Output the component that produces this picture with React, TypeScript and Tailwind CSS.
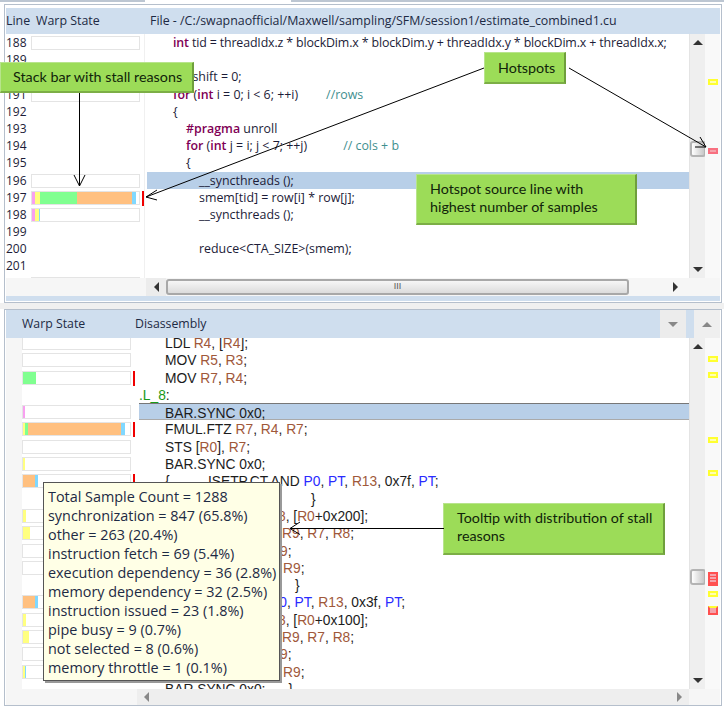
import React from "react";

type Seg = { w: number; c: string };

const PINK = "bg-[#f8a0f0]";
const YEL = "bg-[#ffff80]";
const GRN = "bg-[#80ff90]";
const ORG = "bg-[#ffc080]";
const CYN = "bg-[#80d8ff]";

function Bar({ segs = [], hot = false }: { segs?: Seg[]; hot?: boolean }) {
  return (
    <div className="flex items-start">
      <div className="flex w-[109px] h-[14px] border border-[#e4e4e4] bg-white overflow-hidden">
        {segs.map((s, i) => (
          <div key={i} className={s.c} style={{ width: s.w }} />
        ))}
      </div>
      {hot && <div className="w-[2px] h-[15px] ml-[2px] bg-[#f00000]" />}
    </div>
  );
}

function Tri({ dir, className = "" }: { dir: "up" | "down" | "left" | "right"; className?: string }) {
  const pts = {
    up: "0,6 5,1 10,6",
    down: "0,1 10,1 5,6",
    left: "6,0 6,10 1,5",
    right: "1,0 1,10 6,5",
  }[dir];
  const w = dir === "up" || dir === "down" ? 10 : 7;
  const h = dir === "up" || dir === "down" ? 7 : 10;
  return (
    <svg width={w} height={h} viewBox={`0 0 ${w} ${h}`} className={className}>
      <polygon points={pts} fill="currentColor" />
    </svg>
  );
}

const K = ({ children }: { children: React.ReactNode }) => (
  <span className="text-[#7f0055] font-semibold">{children}</span>
);
const C = ({ children, className = "" }: { children: React.ReactNode; className?: string }) => (
  <span className={`text-[#3f8f8f] ${className}`}>{children}</span>
);
const R = ({ children }: { children: React.ReactNode }) => <span className="text-[#a0583a]">{children}</span>;
const B = ({ children }: { children: React.ReactNode }) => <span className="text-[#2a2aff]">{children}</span>;

const srcRows: { n: number; segs?: Seg[]; bar?: boolean; hot?: boolean; sel?: boolean; pad: string; code?: React.ReactNode }[] = [
  { n: 188, bar: true, pad: "pl-[26px] tracking-[-0.14px]", code: <><K>int</K> tid = threadIdx.z * blockDim.x * blockDim.y + threadIdx.y * blockDim.x + threadIdx.x;</> },
  { n: 189, pad: "" },
  { n: 190, pad: "pl-[26px]", code: <><K>int</K> shift = 0;</> },
  { n: 191, bar: true, pad: "pl-[26px]", code: <><K>for</K> (<K>int</K> i = 0; i &lt; 6; ++i)<C className="ml-[28px]">//rows</C></> },
  { n: 192, pad: "pl-[26px]", code: "{" },
  { n: 193, pad: "pl-[39px]", code: <><K>#pragma</K> unroll</> },
  { n: 194, pad: "pl-[39px]", code: <><K>for</K> (<K>int</K> j = i; j &lt; 7; ++j)<C className="ml-[36px]">// cols + b</C></> },
  { n: 195, pad: "pl-[39px]", code: "{" },
  { n: 196, bar: true, sel: true, pad: "pl-[52px]", code: "__syncthreads ();" },
  { n: 197, bar: true, hot: true, segs: [{ w: 3, c: PINK }, { w: 5, c: YEL }, { w: 37, c: GRN }, { w: 55, c: ORG }, { w: 4, c: CYN }], pad: "pl-[52px]", code: "smem[tid] = row[i] * row[j];" },
  { n: 198, bar: true, segs: [{ w: 3, c: PINK }, { w: 4, c: YEL }, { w: 1, c: CYN }], pad: "pl-[52px]", code: "__syncthreads ();" },
  { n: 199, pad: "" },
  { n: 200, pad: "pl-[52px]", code: "reduce<CTA_SIZE>(smem);" },
  { n: 201, pad: "" },
  { n: 202, bar: true, segs: [{ w: 2, c: PINK }], pad: "pl-[52px]", code: "writemem = 0;" },
];

const asmRows: { segs?: Seg[]; bar?: boolean; hot?: boolean; sel?: boolean; pad: string; code?: React.ReactNode }[] = [
  { bar: true, pad: "pl-[26px]", code: <>LDL <R>R4</R>, [<R>R4</R>];</> },
  { bar: true, pad: "pl-[26px]", code: <>MOV <R>R5</R>, <R>R3</R>;</> },
  { bar: true, hot: true, segs: [{ w: 13, c: GRN }], pad: "pl-[26px]", code: <>MOV <R>R7</R>, <R>R4</R>;</> },
  { pad: "", code: <><span className="text-[#1a9a1a]">.L_8</span>:</> },
  { bar: true, sel: true, segs: [{ w: 2, c: PINK }], pad: "pl-[26px]", code: "BAR.SYNC 0x0;" },
  { bar: true, hot: true, segs: [{ w: 2, c: YEL }, { w: 3, c: GRN }, { w: 93, c: ORG }, { w: 4, c: CYN }], pad: "pl-[26px]", code: <>FMUL.FTZ <R>R7</R>, <R>R4</R>, <R>R7</R>;</> },
  { bar: true, pad: "pl-[26px]", code: <>STS [<R>R0</R>], <R>R7</R>;</> },
  { bar: true, segs: [{ w: 2, c: YEL }], pad: "pl-[26px]", code: "BAR.SYNC 0x0;" },
  { bar: true, hot: true, segs: [{ w: 12, c: ORG }, { w: 3, c: CYN }], pad: "pl-[26px]", code: <>{"{   .  .   ISETP.CT.AND "}<B>P0</B>, <B>PT</B>, <R>R13</R>, 0x7f, <B>PT</B>;</> },
  { pad: "pl-[172px]", code: "}" },
  { bar: true, segs: [{ w: 3, c: YEL }], pad: "pl-[129px]", code: <><R>R8</R>, [<R>R0</R>+0x200];</> },
  { bar: true, segs: [{ w: 7, c: YEL }], pad: "pl-[143px]", code: <><R>R9</R>, <R>R7</R>, <R>R8</R>;</> },
  { bar: true, pad: "pl-[131px]", code: <><R>R9</R>;</> },
  { bar: true, pad: "pl-[144px]", code: <><R>R9</R>;</> },
  { pad: "pl-[156px]", code: "}" },
  { bar: true, segs: [{ w: 12, c: ORG }, { w: 3, c: CYN }], pad: "pl-[131px]", code: <><B>P0</B>, <B>PT</B>, <R>R13</R>, 0x3f, <B>PT</B>;</> },
  { bar: true, segs: [{ w: 3, c: YEL }], pad: "pl-[129px]", code: <><R>R8</R>, [<R>R0</R>+0x100];</> },
  { bar: true, segs: [{ w: 6, c: YEL }], pad: "pl-[143px]", code: <><R>R9</R>, <R>R7</R>, <R>R8</R>;</> },
  { bar: true, pad: "pl-[131px]", code: <><R>R9</R>;</> },
  { bar: true, segs: [{ w: 2, c: YEL }, { w: 1, c: CYN }], pad: "pl-[144px]", code: <><R>R9</R>;</> },
  { pad: "pl-[26px]", code: "BAR.SYNC 0x0;      }" },
];

const stalls = [
  "Total Sample Count = 1288",
  "synchronization = 847 (65.8%)",
  "other = 263 (20.4%)",
  "instruction fetch = 69 (5.4%)",
  "execution dependency = 36 (2.8%)",
  "memory dependency = 32 (2.5%)",
  "instruction issued = 23 (1.8%)",
  "pipe busy = 9 (0.7%)",
  "not selected = 8 (0.6%)",
  "memory throttle = 1 (0.1%)",
];

const Mark = ({ className }: { className: string }) => (
  <div className={`w-[10px] h-[6px] border-2 border-[#ffff30] bg-[#ffffb0] ${className}`} />
);

function VScroll({ thumbTop, children }: { thumbTop: string; children?: React.ReactNode }) {
  return (
    <>
      <div className="w-[16px] flex flex-col bg-[#efefef] border-l border-[#e4e4e4] text-[#333]">
        <div className="h-[17px] flex items-center justify-center">
          <Tri dir="up" />
        </div>
        <div className={`w-[16px] h-[16px] border-2 border-[#b4b4b4] rounded-[3px] bg-gradient-to-r from-white to-[#c8c8c8] ${thumbTop}`} />
        <div className="h-[17px] mt-auto flex items-center justify-center">
          <Tri dir="down" />
        </div>
      </div>
      <div className="w-[15px] flex flex-col pl-[3px] bg-[#f9f9f9]">{children}</div>
    </>
  );
}

function Callout({ className, children }: { className: string; children: React.ReactNode }) {
  return (
    <div className={`absolute z-20 bg-[#9cdc58] border border-[#b8e48c] border-r-2 border-b-2 border-r-[#6f9f3c] border-b-[#7cae46] font-['Lato',sans-serif] text-[14.3px] leading-[18px] text-[#10240a] ${className}`}>
      {children}
    </div>
  );
}

export default function App() {
  return (
    <div className="relative w-[724px] h-[708px] bg-white overflow-hidden">
      <div className="flex h-[2px]">
        <div className="w-[145px] bg-[#bcc6d2]" />
        <div className="w-[146px]" />
        <div className="flex-1 bg-[#bcc6d2]" />
      </div>

      {/* SOURCE PANE */}
      <div className="mt-[2px] ml-[4px] mr-[2px] px-px pt-[3px] pb-px border border-[#b5bfcc]">
        <div className="h-[26px] flex items-center bg-[#cfdeee] text-[#1d2a44] font-['Open_Sans',sans-serif] text-[12.4px]">
          <span className="w-[30px]">Line</span>
          <span className="w-[114px]">Warp State</span>
          <span>File - /C:/swapnaofficial/Maxwell/sampling/SFM/session1/estimate_combined1.cu</span>
        </div>
        <div className="flex h-[244px]">
          <div className="w-[683px] overflow-hidden">
            {srcRows.map((r) => (
              <div key={r.n} className="flex h-[17.2px] font-['Open_Sans',sans-serif] text-[12.4px] leading-[17px] text-[#1c1c38] whitespace-pre">
                <div className="w-[25px] text-[12px]">{r.n}</div>
                <div className="w-[114px] pt-[2px] border-r border-[#f0f0f0]">{r.bar && <Bar segs={r.segs} hot={r.hot} />}</div>
                <div className={`flex-1 ml-[2px] ${r.pad} ${r.sel ? "bg-[#b8cfe8]" : ""}`}>{r.code}</div>
              </div>
            ))}
          </div>
          <VScroll thumbTop="mt-[90px]">
            <Mark className="mt-[45px]" />
            <div className="w-[10px] h-[6px] mt-[63px] border-2 border-[#f87080] bg-[#f4a4ac]" />
          </VScroll>
        </div>
        <div className="flex h-[18px] text-[#333] bg-[#f6f6f6]">
          <div className="w-[140px]" />
          <div className="w-[20px] flex items-center justify-center bg-[#ececec]">
            <Tri dir="left" />
          </div>
          <div className="w-[463px] my-px flex items-center justify-center rounded-[3px] border-2 border-[#a8a8a8] bg-gradient-to-b from-[#f6f6f6] to-[#dcdcdc] text-[9px] font-['Liberation_Sans',sans-serif] text-[#555]">
            III
          </div>
          <div className="w-[60px] flex items-center justify-end pr-[10px]">
            <Tri dir="right" />
          </div>
        </div>
        <div className="h-[5px] bg-[#cfdeee]" />
      </div>

      <div className="h-[6px] bg-[#f0f0f0]" />

      {/* DISASSEMBLY PANE */}
      <div className="ml-[4px] mr-[2px] px-px border-t border-b border-x border-[#b5bfcc]">
        <div className="flex h-[28px] bg-[#cfdeee] text-[#1d2a44] font-['Open_Sans',sans-serif] text-[12.3px]">
          <div className="w-[654px] flex items-center pl-[16px]">
            <span className="w-[113px]">Warp State</span>
            <span>Disassembly</span>
          </div>
          <div className="w-[26px] flex items-center justify-center bg-[#ececec] text-[#888]">
            <Tri dir="down" />
          </div>
          <div className="w-[8px]" />
          <div className="flex-1 flex items-center justify-center bg-[#efefef] text-[#888]">
            <Tri dir="up" />
          </div>
        </div>
        <div className="flex h-[351px]">
          <div className="w-[683px] overflow-hidden">
            <div className="-mt-[4px]">
              {asmRows.map((r, i) => (
                <div key={i} className="flex h-[17.3px] font-['Liberation_Sans',sans-serif] text-[13.8px] leading-[17px] text-[#1c1c1c] whitespace-pre">
                  <div className="w-[16px] bg-[#f6f6f6]" />
                  <div className="w-[117px] pt-[2px]">{r.bar && <Bar segs={r.segs} hot={r.hot} />}</div>
                  <div className={`flex-1 pt-px ${r.pad} ${r.sel ? "bg-[#b8cfe8] border-t border-b border-t-[#777] border-b-[#aaa]" : ""}`}>{r.code}</div>
                </div>
              ))}
            </div>
          </div>
          <VScroll thumbTop="mt-[214px]">
            <Mark className="mt-[18px]" />
            <Mark className="mt-[10px]" />
            <Mark className="mt-[59px]" />
            <Mark className="mt-[27px]" />
            <div className="w-[10px] h-[14px] mt-[96px] flex flex-col gap-px border-2 border-[#ff5050] bg-[#ff5050]">
              <div className="h-[2px] bg-[#f4a4ac]" />
              <div className="h-[2px] bg-[#f4a4ac]" />
              <div className="h-[2px] bg-[#f4a4ac]" />
            </div>
            <Mark className="mt-[5px]" />
            <div className="w-[10px] h-[9px] mt-[9px] border-2 border-[#ff5050] border-t-[#ffff30] bg-[#f4a4ac]" />
          </VScroll>
        </div>
        <div className="flex h-[16px] text-[#888] bg-[#f6f6f6]">
          <div className="w-[131px]" />
          <div className="w-[552px] flex items-center justify-between px-[6px] bg-[#eeeeee]">
            <Tri dir="left" />
            <Tri dir="right" />
          </div>
        </div>
      </div>

      {/* ANNOTATIONS */}
      <Callout className="left-0 top-[62px] w-[194px] h-[31px] pl-[12px] pt-[5px]">Stack bar with stall reasons</Callout>
      <Callout className="left-[484px] top-[52px] w-[82px] h-[32px] pl-[13px] pt-[6px]">Hotspots</Callout>
      <Callout className="left-[416px] top-[174px] w-[221px] h-[51px] pl-[13px] pt-[5px]">
        Hotspot source line with
        <br />
        highest number of samples
      </Callout>
      <Callout className="left-[443px] top-[503px] w-[222px] h-[52px] pl-[13px] pt-[5px]">
        Tooltip with distribution of stall
        <br />
        reasons
      </Callout>

      <div className="absolute z-10 left-[43px] top-[482px] w-[237px] h-[199px] px-[4px] pt-[4px] bg-[#ffffe6] border border-[#555] shadow-[2px_2px_0_#999] font-['Open_Sans',sans-serif] text-[14.4px] leading-[19px] text-[#1d2a44] whitespace-pre">
        {stalls.map((s) => (
          <div key={s}>{s}</div>
        ))}
      </div>

      <svg className="absolute z-30 left-0 top-0 pointer-events-none" width="724" height="708" fill="none" stroke="#000" strokeWidth="1">
        <path d="M79.5 93V186M74 175l5.500 11 5.500-11" />
        <path d="M484 68L146 197M157 190l-11 7 11 3" />
        <path d="M569 68L706 147M695 147h11M700 137l6 10" />
        <path d="M444 528.500H290M300 522l-10 6.500 10 6" />
      </svg>
    </div>
  );
}
